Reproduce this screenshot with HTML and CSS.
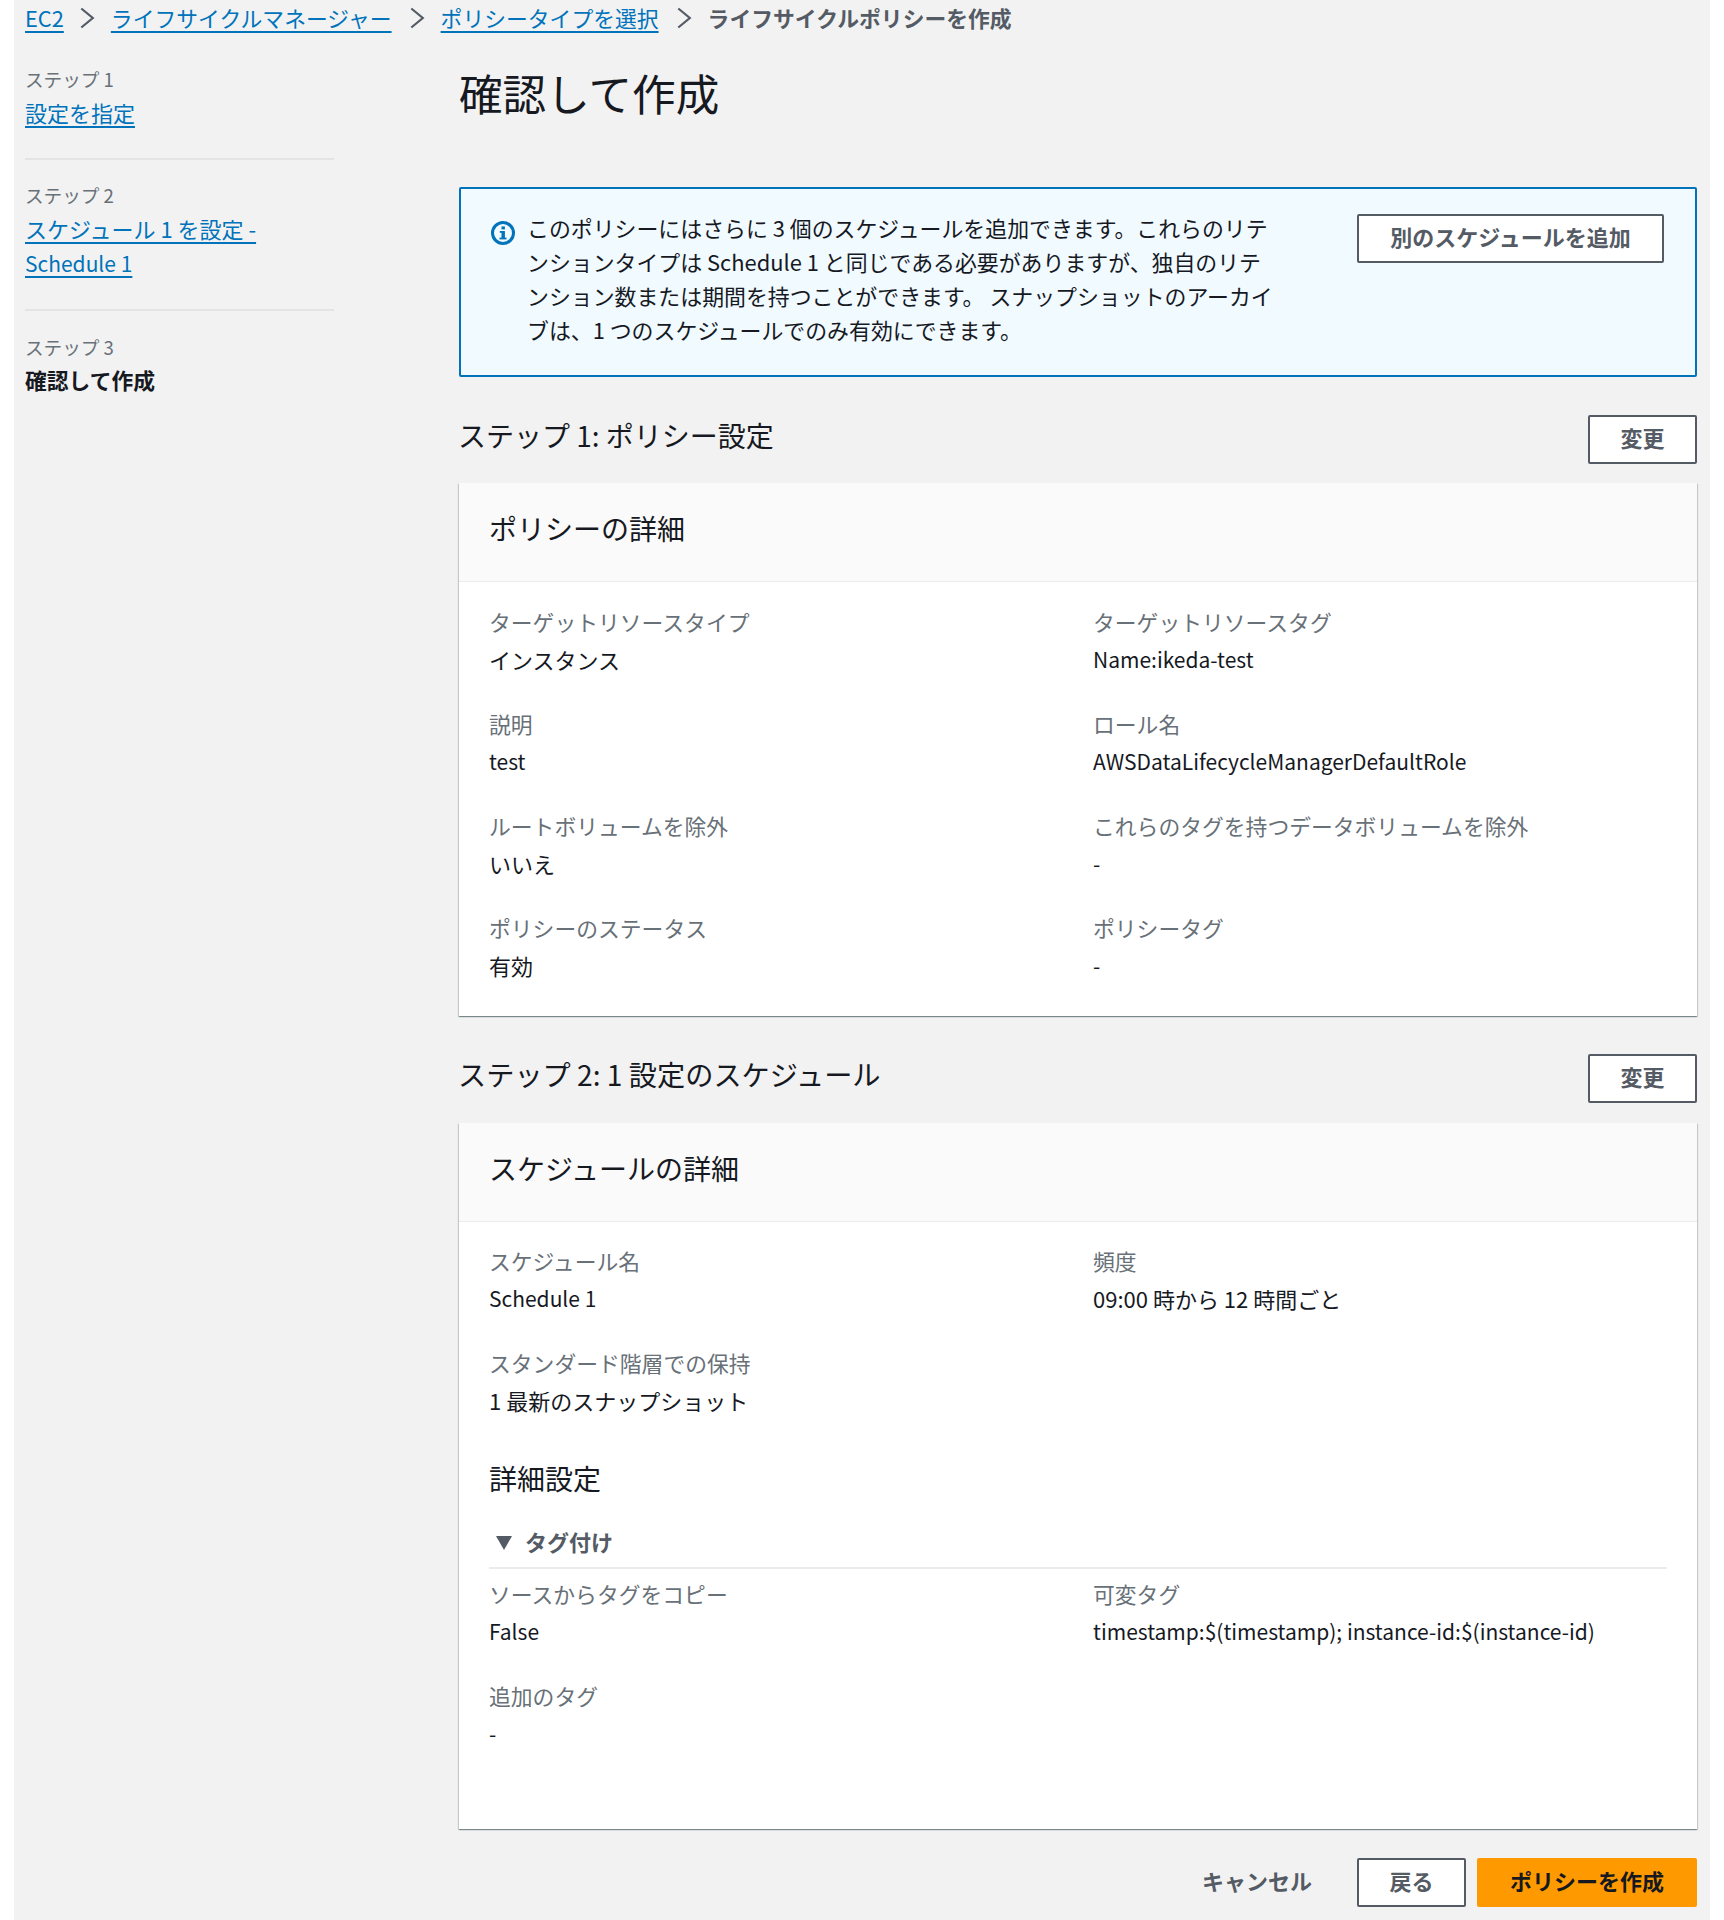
FILE: index.html
```html
<!DOCTYPE html>
<html lang="ja">
<head>
<meta charset="utf-8">
<title>確認して作成</title>
<link rel="stylesheet" href="styles.css">
</head>
<body>
<div class="page">
  <nav class="crumbs">
    <a href="#">EC2</a>
    <svg class="chev first" viewBox="0 0 14 22"><path d="M.8 1.5L12.3 11 .8 20.5" fill="none" stroke="#545b64" stroke-width="2.2"/></svg>
    <a href="#">ライフサイクルマネージャー</a>
    <svg class="chev" viewBox="0 0 14 22"><path d="M.8 1.5L12.3 11 .8 20.5" fill="none" stroke="#545b64" stroke-width="2.2"/></svg>
    <a href="#">ポリシータイプを選択</a>
    <svg class="chev" viewBox="0 0 14 22"><path d="M.8 1.5L12.3 11 .8 20.5" fill="none" stroke="#545b64" stroke-width="2.2"/></svg>
    <span class="current">ライフサイクルポリシーを作成</span>
  </nav>
  <div class="layout">
    <aside class="side">
      <div class="step step-first">
        <div class="step-no">ステップ 1</div>
        <a class="step-link" href="#">設定を指定</a>
      </div>
      <div class="step">
        <div class="step-no">ステップ 2</div>
        <a class="step-link" href="#">スケジュール 1 を設定 -<br><span class="latin">Schedule 1</span></a>
      </div>
      <div class="step last">
        <div class="step-no">ステップ 3</div>
        <div class="step-cur">確認して作成</div>
      </div>
    </aside>
    <main class="main">
      <h1 class="title">確認して作成</h1>
      <section class="info">
        <svg class="info-icon" viewBox="0 0 26 26"><circle cx="13" cy="13" r="10.5" fill="none" stroke="#0073bb" stroke-width="3"/><rect x="11.5" y="11" width="3.4" height="8" fill="#0073bb"/><rect x="9.5" y="17.6" width="7" height="1.8" fill="#0073bb"/><rect x="9.8" y="11" width="4" height="1.8" fill="#0073bb"/><rect x="11.5" y="6.4" width="3.4" height="3" fill="#0073bb"/></svg>
        <p class="info-text">このポリシーにはさらに 3 個のスケジュールを追加できます。これらのリテ<br>ンションタイプは Schedule 1 と同じである必要がありますが、独自のリテ<br>ンション数または期間を持つことができます。 スナップショットのアーカイ<br>ブは、1 つのスケジュールでのみ有効にできます。</p>
        <button class="btn btn-add">別のスケジュールを追加</button>
      </section>

      <div class="sec-head one">
        <h2 class="sec-title">ステップ 1: ポリシー設定</h2>
        <button class="btn btn-edit">変更</button>
      </div>
      <section class="card">
        <header class="card-head"><h3>ポリシーの詳細</h3></header>
        <div class="card-body grid">
          <div class="kv"><div class="k">ターゲットリソースタイプ</div><div class="v ja">インスタンス</div></div>
          <div class="kv"><div class="k">ターゲットリソースタグ</div><div class="v">Name:ikeda-test</div></div>
          <div class="kv"><div class="k">説明</div><div class="v">test</div></div>
          <div class="kv"><div class="k">ロール名</div><div class="v">AWSDataLifecycleManagerDefaultRole</div></div>
          <div class="kv"><div class="k">ルートボリュームを除外</div><div class="v ja">いいえ</div></div>
          <div class="kv"><div class="k">これらのタグを持つデータボリュームを除外</div><div class="v">-</div></div>
          <div class="kv"><div class="k">ポリシーのステータス</div><div class="v ja">有効</div></div>
          <div class="kv"><div class="k">ポリシータグ</div><div class="v">-</div></div>
        </div>
      </section>

      <div class="sec-head two">
        <h2 class="sec-title">ステップ 2: 1 設定のスケジュール</h2>
        <button class="btn btn-edit">変更</button>
      </div>
      <section class="card card-two">
        <header class="card-head"><h3>スケジュールの詳細</h3></header>
        <div class="card-body body-two">
          <div class="grid">
            <div class="kv"><div class="k">スケジュール名</div><div class="v">Schedule 1</div></div>
            <div class="kv"><div class="k">頻度</div><div class="v ja">09:00 時から 12 時間ごと</div></div>
            <div class="kv"><div class="k">スタンダード階層での保持</div><div class="v ja">1 最新のスナップショット</div></div>
          </div>
          <h4 class="adv">詳細設定</h4>
          <div class="tagging"><svg class="tri" viewBox="0 0 16 14"><path d="M0 0h16L8 14z" fill="#545b64"/></svg><span>タグ付け</span></div>
          <div class="grid">
            <div class="kv"><div class="k">ソースからタグをコピー</div><div class="v">False</div></div>
            <div class="kv"><div class="k">可変タグ</div><div class="v">timestamp:$(timestamp); instance-id:$(instance-id)</div></div>
            <div class="kv"><div class="k">追加のタグ</div><div class="v">-</div></div>
          </div>
        </div>
      </section>

      <footer class="actions">
        <button class="btn-link">キャンセル</button>
        <button class="btn btn-back">戻る</button>
        <button class="btn btn-primary">ポリシーを作成</button>
      </footer>
    </main>
  </div>
</div>
</body>
</html>
```

FILE: styles.css
```css
* { box-sizing: border-box; }
html, body { margin: 0; padding: 0; background: #fff; }
body {
  font-family: "Noto Sans CJK JP", "Noto Sans", sans-serif;
  color: #16191f;
  font-size: 21px;
}
.page {
  margin-left: 14px;
  width: 1696px;
  height: 1920px;
  background: #f2f2f2;
  padding-left: 11px;
  overflow: hidden;
}
a { color: #0073bb; text-decoration: underline; text-underline-offset: 4px; text-decoration-thickness: 2px; }

.crumbs {
  display: flex;
  align-items: center;
  height: 34px;
  font-size: 21.8px;
  white-space: nowrap;
}
.crumbs .chev { width: 15px; height: 22px; margin: 2px 16px 0 18px; flex: none; }
.crumbs .chev.first { margin-left: 16px; }
.current { font-weight: 700; color: #545b64; font-size: 21.8px; }

.layout { display: flex; }
.side { width: 309px; flex: none; padding-top: 28px; margin-right: 125px; }
.step { border-bottom: 2px solid #e3e5e5; padding-bottom: 29px; margin-bottom: 19px; }
.step-first { margin-bottom: 18px; }
.step.last { border-bottom: 0; }
.step-no { font-size: 18.6px; line-height: 33px; color: #687078; }
.step-link { display: inline-block; font-size: 22px; line-height: 34px; }
.latin { font-size: 21px; }
.step-cur { font-size: 21.8px; font-weight: 700; line-height: 34px; }

.main { width: 1238px; flex: none; }
.title { margin: 0; font-size: 43.6px; font-weight: 400; line-height: 60px; padding-top: 28px; height: 153px; }

.info {
  display: flex;
  align-items: flex-start;
  height: 190px;
  border: 2px solid #0073bb;
  border-radius: 2px;
  background: #f1faff;
  padding: 22px 31px 0 29px;
}
.info-icon { width: 26px; height: 26px; margin: 9px 11px 0 0; flex: none; }
.info-text { margin: 0; width: 830px; font-size: 21.9px; line-height: 34px; white-space: nowrap; flex: none; color: #16191f; }
.btn {
  display: block;
  height: 49px;
  border: 2px solid #545b64;
  border-radius: 2px;
  background: #fff;
  color: #545b64;
  font: 700 22px/1 "Noto Sans CJK JP", "Noto Sans", sans-serif;
  padding: 0 0 5px;
}
.btn-add { width: 307px; margin-top: 3px; }
.btn-edit { width: 109px; }

.sec-head { display: flex; justify-content: space-between; align-items: flex-start; }
.sec-head.one { margin-top: 38px; height: 68px; }
.sec-head.two { margin-top: 38px; height: 69px; }
.sec-title { margin: 0 0 0 -1px; font-size: 28px; font-weight: 400; line-height: 40px; color: #16191f; }
.two .sec-title { margin-top: 0; font-size: 28.2px; }

.card { background: #fff; height: 533px; box-shadow: 0 1px 1px 0 rgba(0,28,36,.3), 1px 1px 1px 0 rgba(0,28,36,.15), -1px 1px 1px 0 rgba(0,28,36,.15); }
.card-two { height: 706px; }
.card-head { height: 99px; background: #fafafa; border-bottom: 1px solid #eaeded; padding: 25px 30px 0; }
.card-head h3 { margin: 0; font-size: 28px; font-weight: 400; line-height: 40px; }
.card-body { padding: 21px 30px 0; }
.card-body.body-two { padding-top: 20px; }
.grid { display: grid; grid-template-columns: 604px 1fr; row-gap: 27px; }
.kv { min-height: 75px; }
.k { font-size: 21.8px; line-height: 38px; color: #687078; }
.v { font-size: 21px; line-height: 37px; color: #16191f; }
.v.ja { font-size: 22px; }

.adv { margin: 39px 0 0; font-size: 28px; font-weight: 400; line-height: 40px; }
.tagging {
  display: flex;
  align-items: center;
  margin-top: 22px;
  height: 49px;
  padding: 0 0 6px 7px;
  border-bottom: 2px solid #eaeded;
  font-weight: 700;
  color: #545b64;
  font-size: 22px;
  margin-bottom: 6px;
}
.tri { width: 16px; height: 14px; margin: 5px 13px 0 0; }

.actions { display: flex; justify-content: flex-end; align-items: center; margin-top: 29px; }
.btn-link { border: 0; background: none; font: 700 22px/1 "Noto Sans CJK JP", sans-serif; color: #545b64; padding: 0 0 5px; margin-right: 45px; }
.btn-back { width: 109px; margin-right: 11px; }
.btn-primary { width: 220px; background: #ff9900; border-color: #ff9900; color: #16191f; }
```
